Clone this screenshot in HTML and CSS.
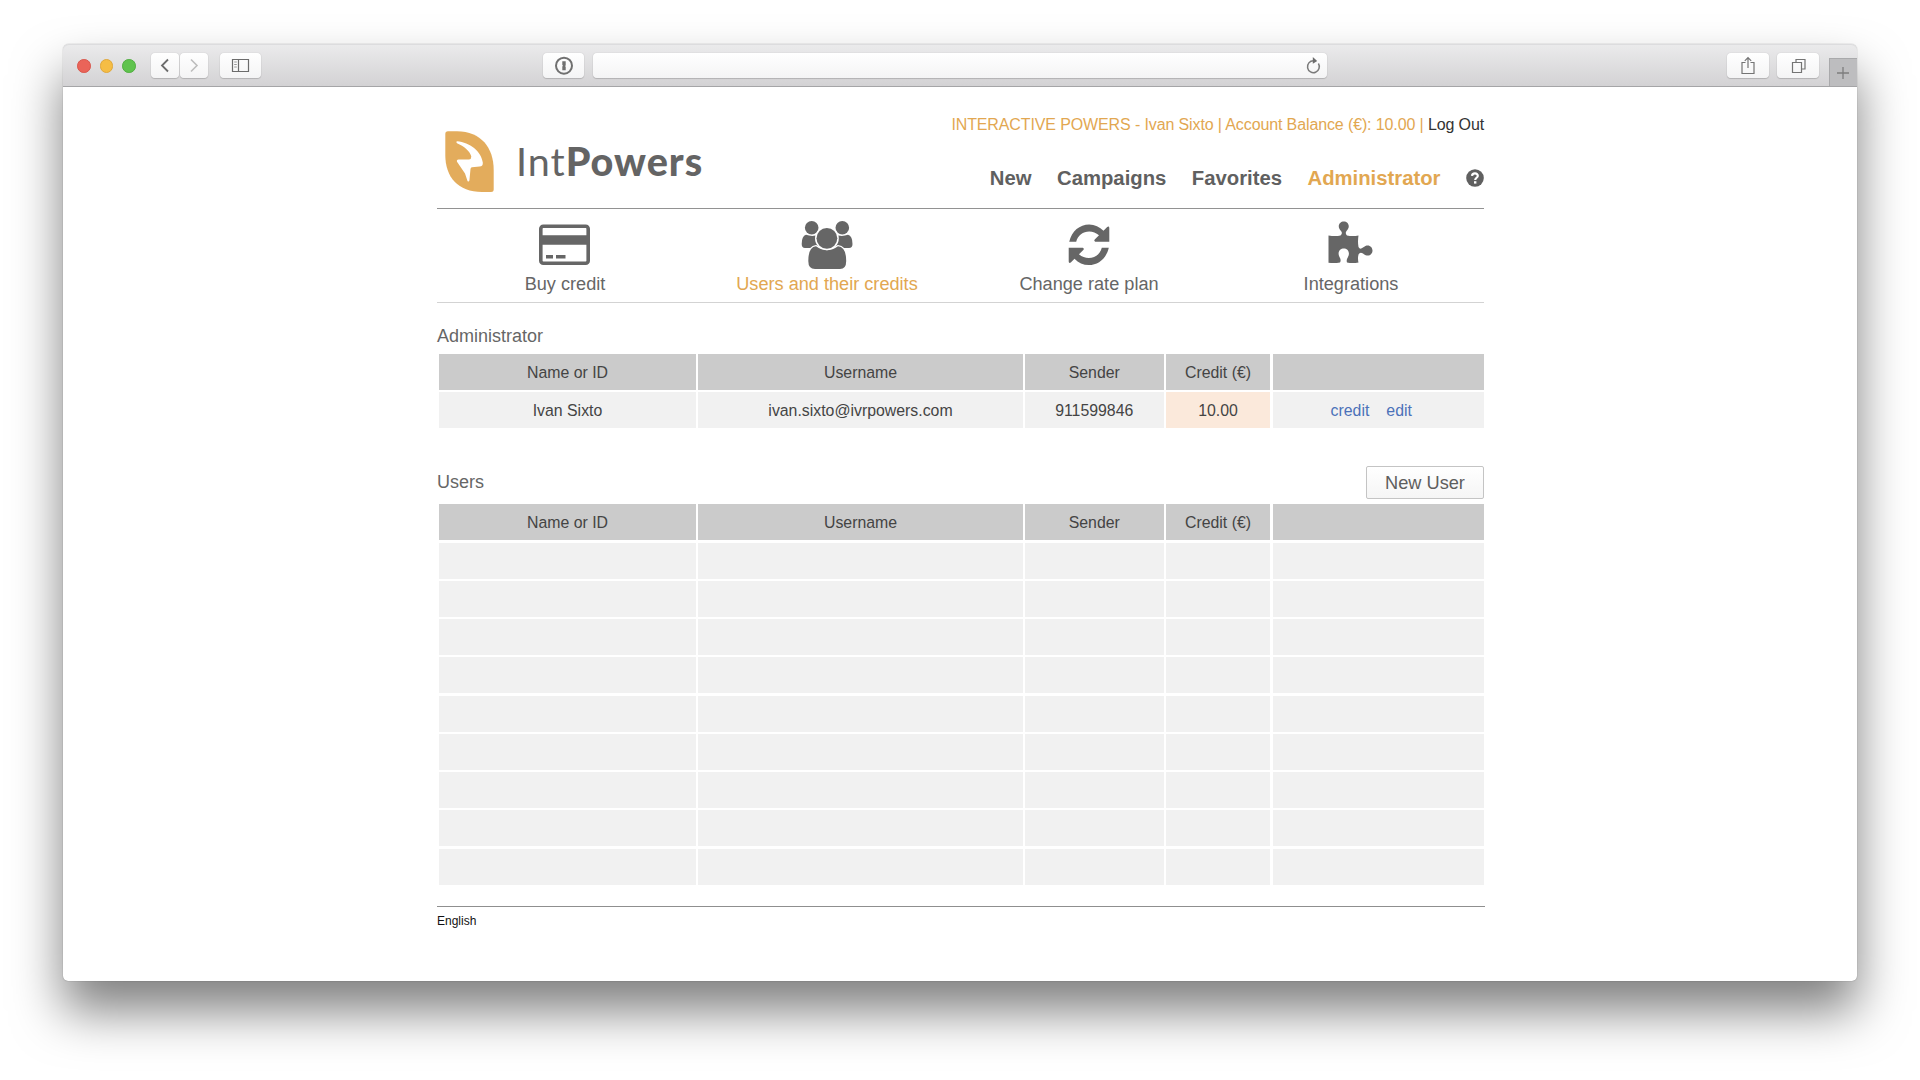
FILE: index.html
```html
<!DOCTYPE html>
<html lang="en">
<head>
<meta charset="utf-8">
<title>IntPowers</title>
<link rel="stylesheet" href="styles.css">
</head>
<body>
<div class="window">
  <div class="toolbar">
    <div class="lights"><i class="red"></i><i class="yellow"></i><i class="green"></i></div>
    <div class="history">
      <span class="tool back"><svg width="28" height="25" viewBox="0 0 28 25"><path d="M17 6.500 11 12.500 17 18.500" fill="none" stroke="#6c6c6c" stroke-width="1.800"/></svg></span>
      <span class="tool forward"><svg width="28" height="25" viewBox="0 0 28 25"><path d="M11 6.500 17 12.500 11 18.500" fill="none" stroke="#bdbdbd" stroke-width="1.600"/></svg></span>
    </div>
    <span class="tool sidebar"><svg width="41" height="25" viewBox="0 0 41 25"><path d="M12.500 6.500h16v12h-16zM18.500 6.500v12" fill="none" stroke="#6c6c6c" stroke-width="1.200"/><path d="M14.200 9h2.600M14.200 11.500h2.600M14.200 14h2.600" stroke="#999"/></svg></span>
    <span class="tool onepass"><svg width="41" height="25" viewBox="0 0 41 25"><circle cx="21" cy="12.700" r="8" fill="none" stroke="#707070" stroke-width="2"/><path d="M19.300 8.300h3.400v4.200l-.7.600.7.700v3.500h-3.400v-3.800l.7-.7-.7-.7z" fill="#707070"/></svg></span>
    <div class="tool address"><svg width="18" height="21" viewBox="0 0 18 21"><path d="M13.400 7.500a5.900 6 0 1 1-5-2.800" fill="none" stroke="#7b7b7b" stroke-width="1.500"/><path d="M7.800 1 12.200 4.900 7.800 7.700z" fill="#6c6c6c"/></svg></div>
    <span class="tool share"><svg width="42" height="25" viewBox="0 0 42 25"><path d="M18.500 9.500h-3.500v11h12v-11h-3.500M21 15V5M17.800 7.800 21 4.600l3.200 3.200" fill="none" stroke="#747474" stroke-width="1.200"/></svg></span>
    <span class="tool tabs"><svg width="42" height="25" viewBox="0 0 42 25"><path d="M15.500 9.500h9v10h-9zM19 9V6.500h9V16h-3" fill="none" stroke="#747474" stroke-width="1.200"/></svg></span>
    <span class="newtab"><svg width="28" height="28" viewBox="0 0 28 28"><path d="M13 8v12M7 14h12" stroke="#7d7d7d" stroke-width="1.300"/></svg></span>
  </div>

  <div class="page">
    <header class="header">
      <div class="brand">
        <svg width="49" height="61" viewBox="0 0 49 61"><path d="M.3 3Q.3.300 3 .300H12C36 .300 48.700 17 48.700 39V58.500Q48.700 61 46 61H37C13 61 .300 46 .300 24Z" fill="#e3ac5c"/><path d="M12 10.300C25 11.500 36 20 37.800 31.500Q38.200 35.300 34.500 35.500L27 36.200Q25.600 36.500 25.500 38L24.400 49.500Q23.700 51.300 22.500 50L20 42.500 12 30.800Q11.300 28.700 13.500 28.500H24Q26.500 28 26.300 25.500C25 20 19 15 12 12.200Q10.500 11 12 10.300Z" fill="#fff"/></svg>
        <div class="wordmark">Int<b>Powers</b></div>
      </div>
      <div class="header-side">
        <div class="account">INTERACTIVE POWERS - Ivan Sixto | Account Balance (€): 10.00 | <a>Log Out</a></div>
        <nav class="nav">
          <a>New</a><a>Campaigns</a><a>Favorites</a><a class="active">Administrator</a>
          <svg width="18" height="18" viewBox="0 0 18 18"><circle cx="9" cy="9" r="8.800" fill="#606060"/><path d="M6 6.900C6.200 3.400 12 3.600 11.800 7 11.600 8.800 9.200 8.800 9.200 11" fill="none" stroke="#fff" stroke-width="2.200"/><path d="M8 12.200h2.400v2.400H8z" fill="#fff"/></svg>
        </nav>
      </div>
    </header>

    <nav class="submenu">
      <a>
        <svg width="52" height="50" viewBox="0 0 52 50" fill="#666"><rect x="1.800" y="6.300" width="47.400" height="37" rx="2.500" fill="none" stroke="#666" stroke-width="3.600"/><path d="M2 15.300h47v9.400H2zM7 35h7v3.500H7zM17 35h9.500v3.500H17z"/></svg>
        <span>Buy credit</span>
      </a>
      <a class="active">
        <svg width="52" height="50" viewBox="0 0 52 50" fill="#666"><circle cx="10.700" cy="7.800" r="6.800"/><circle cx="41.300" cy="7.800" r="6.800"/><path d="M5 14.800Q.700 16 .700 24Q.700 28 4 28H18V14.800Q11 17 5 14.800ZM47 14.800Q51.500 16 51.500 24Q51.500 28 48 28H34V14.800Q41 17 47 14.800Z"/><path d="M15 26.300Q26 34 37 26.300Q45.200 27 45.200 41Q45.200 49 39 49H14Q7.300 49 7.300 41Q7.300 27 15 26.300Z" stroke="#fff" stroke-width="2.400" paint-order="stroke"/><circle cx="25.900" cy="18.300" r="10.400" stroke="#fff" stroke-width="3" paint-order="stroke"/></svg>
        <span>Users and their credits</span>
      </a>
      <a>
        <svg width="52" height="50" viewBox="-.7 0 52 50" fill="#666"><g id="arrow"><path d="M5.500 21.800C8 11 16 4.500 25.500 4.500C31 4.500 36 6.800 39.800 10.800L43.500 7Q45.500 5.800 45.600 8V21.800H31.500Q29.800 21 31 19.500L35.300 15.300C32.500 12.800 29 11.500 25.500 11.500C19.500 11.500 14 15.500 12.500 21.800Z"/></g><use href="#arrow" transform="rotate(180 25.300 24.800)"/></svg>
        <span>Change rate plan</span>
      </a>
      <a>
        <svg width="52" height="50" viewBox="-1.500 -.5 52 50" fill="#666"><path d="M2 15Q9 16 14 15Q16.500 13 14.500 10.500C10 6 13 1 17.300 1S24.500 6 20 10.500Q18.300 13 20.500 15Q26 16 32 15Q31 21 32 26.500Q33.500 29.500 36.500 27C41.500 22.500 46 26 46 30S41.500 37.500 36.500 33Q33.500 31 32 34Q31 38 32 42Q26 43 20.500 42Q19.500 39.500 21.500 36.500C24 31.500 21 28 17.300 28S10.500 31.500 13 36.500Q15 39.500 13.500 42Q8 43 2 42.300Z"/></svg>
        <span>Integrations</span>
      </a>
    </nav>

    <h2 class="title">Administrator</h2>
    <div class="table">
      <b>Name or ID</b><b>Username</b><b>Sender</b><b>Credit (€)</b><b></b>
      <div>Ivan Sixto</div><div>ivan.sixto@ivrpowers.com</div><div>911599846</div><div class="amount">10.00</div><div class="actions"><a>credit</a><a>edit</a></div>
    </div>

    <div class="users-head"><h2>Users</h2><button class="new-user">New User</button></div>
    <div class="table">
      <b>Name or ID</b><b>Username</b><b>Sender</b><b>Credit (€)</b><b></b>
      <div></div><div></div><div></div><div></div><div></div>
      <div></div><div></div><div></div><div></div><div></div>
      <div></div><div></div><div></div><div></div><div></div>
      <div></div><div></div><div></div><div></div><div></div>
      <div></div><div></div><div></div><div></div><div></div>
      <div></div><div></div><div></div><div></div><div></div>
      <div></div><div></div><div></div><div></div><div></div>
      <div></div><div></div><div></div><div></div><div></div>
      <div></div><div></div><div></div><div></div><div></div>
    </div>
    <footer class="footer">English</footer>
  </div>
</div>
</body>
</html>
```

FILE: styles.css
```css
* { box-sizing: border-box; }
body {
  margin: 0;
  height: 1080px;
  padding: 44px 63px 0;
  overflow: hidden;
  background: #fff;
  color: #444;
  font-family: "Liberation Sans", Arial, sans-serif;
}
svg { display: block; flex: none; }
h2 { margin: 0; font-size: 18px; line-height: 24px; font-weight: 400; color: #666; }

.window {
  width: 1794px;
  height: 937px;
  border-radius: 6px 6px 5px 5px;
  background: #fff;
  box-shadow: 0 0 1px rgba(0, 0, 0, .5), 0 30px 50px rgba(0, 0, 0, .5);
}

/* browser toolbar */
.toolbar {
  display: flex;
  align-items: flex-start;
  height: 43px;
  padding: 9px 0 0 14px;
  border-bottom: 1px solid #a5a5a7;
  border-radius: 6px 6px 0 0;
  background: linear-gradient(#ebebec, #d3d2d4);
  box-shadow: inset 0 1px #dcdcde;
}
.lights { display: flex; gap: 9px; padding-top: 6px; }
.lights i { width: 13.700px; height: 13.700px; border-radius: 50%; }
.red { background: #ea6459; border: 1px solid #d9564c; }
.yellow { background: #f5bd45; border: 1px solid #e0a73a; }
.green { background: #5fc34d; border: 1px solid #51ae41; }
.history { display: flex; gap: 1px; margin-left: 15px; }
.tool {
  display: block;
  height: 25px;
  border-radius: 4px;
  background: linear-gradient(#fff, #f4f4f5);
  box-shadow: 0 0 1px rgba(0, 0, 0, .25), 0 1px 1px rgba(0, 0, 0, .15);
}
.sidebar { margin-left: 11.500px; }
.onepass { margin-left: 282px; }
.address {
  display: flex;
  justify-content: flex-end;
  width: 734px;
  margin-left: 9px;
  padding: 3px 4px 0 0;
}
.share { margin-left: 400px; }
.tabs { margin-left: 8.500px; }
.newtab {
  margin: 5px 0 0 auto;
  border: solid #a9a9ab;
  border-width: 1px 0 0 1px;
  background: #bdbdbf;
  height: 28px;
  width: 28px;
}

/* page */
.page { width: 1047px; margin-left: 374px; }
.header {
  display: flex;
  justify-content: space-between;
  height: 122px;
  border-bottom: 1px solid #929292;
}
.brand { display: flex; padding: 44px 0 0 8px; gap: 22px; }
.wordmark {
  padding-top: 7px;
  font: 400 39.500px/46px Lato, sans-serif;
  letter-spacing: 1px;
  color: #646464;
  white-space: nowrap;
}
.wordmark b { font-weight: 900; }
.header-side { padding-top: 28px; }
.account {
  font-size: 16px;
  line-height: 20px;
  letter-spacing: -.12px;
  color: #e2a751;
  text-align: right;
  white-space: nowrap;
}
.account a { color: #333; }
.nav {
  display: flex;
  justify-content: flex-end;
  align-items: center;
  gap: 25.500px;
  margin-top: 31px;
  font-size: 20.300px;
  line-height: 24px;
  font-weight: 700;
  color: #606060;
}
.nav .active, .submenu .active { color: #e2a751; }

.submenu {
  display: grid;
  grid-template-columns: repeat(4, 262px);
  height: 94px;
  margin-bottom: 21px;
  border-bottom: 1px solid #d3d3d3;
}
.submenu a {
  display: flex;
  flex-direction: column;
  align-items: center;
  gap: 2px;
  margin: 11px 3px 0 -3px;
  font-size: 18.150px;
  line-height: 24px;
  color: #666;
}

.table {
  display: grid;
  grid-template-columns: 257px 324.500px 138.500px 104.500px 211.500px;
  grid-auto-rows: 36px;
  gap: 2.250px;
  width: 1045px;
  margin-left: 2px;
  font-size: 15.850px;
  line-height: 38px;
  text-align: center;
}
.title { margin-bottom: 6px; }
.table b { font-weight: 400; background: #cbcbcb; }
.table div { background: #f1f1f1; }
.table .amount { background: #fbe9db; }
.actions { display: flex; justify-content: center; gap: 17px; padding-right: 14px; color: #4c71b9; }

.users-head { display: flex; justify-content: space-between; align-items: center; margin: 38px 0 5px; }
.users-head h2 { padding-bottom: 2px; }
.new-user {
  width: 118px;
  height: 33px;
  padding: 2px 0 0;
  border: 1px solid #c4c4c4;
  border-radius: 2px;
  background: linear-gradient(#fff, #f5f5f5);
  font: 18.200px/29px "Liberation Sans", Arial, sans-serif;
  color: #5e5e5e;
}
.footer {
  width: 1048px;
  margin-top: 21px;
  padding-top: 6px;
  border-top: 1px solid #8f8f8f;
  font-size: 12px;
  line-height: 16px;
  color: #111;
}
```
